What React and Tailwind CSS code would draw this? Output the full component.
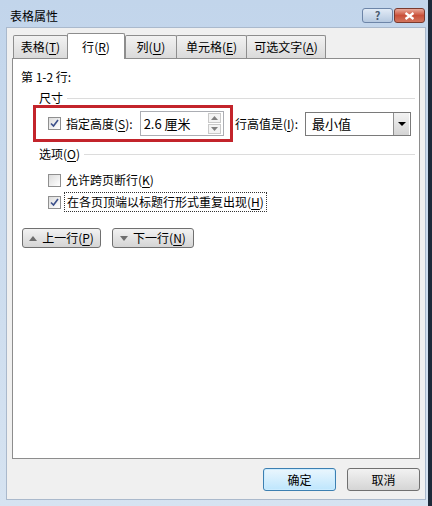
import { useState } from "react";

const font = { fontFamily: '"Noto Sans CJK SC", "Noto Sans", sans-serif' };

function U({ children }) {
  return <span className="underline underline-offset-2">{children}</span>;
}

function Check({ checked }) {
  return (
    <span className="w-[13px] h-[13px] border border-[#8f8f8f] bg-gradient-to-br from-[#dcdcdc] to-white flex items-center justify-center shrink-0">
      {checked && (
        <svg width="9" height="9" viewBox="0 0 9 9">
          <path d="M1 4.5 L3.5 7 L8 1" fill="none" stroke="#3b4f8a" strokeWidth="1.6" />
        </svg>
      )}
    </span>
  );
}

function Tab({ label, hot, active, className = "" }) {
  if (active) {
    return (
      <div className={"relative z-10 -mb-px h-[26px] flex items-center justify-center bg-white border border-b-0 border-[#8d8d8d] rounded-t-[2px] text-[12px] text-black " + className}>
        {label}(<U>{hot}</U>)
      </div>
    );
  }
  return (
    <div className={"mt-[3px] h-[23px] flex items-center justify-center bg-gradient-to-b from-[#f2f2f2] to-[#dadada] border border-b-0 border-[#8d8d8d] rounded-t-[2px] text-[12px] text-black -mr-px " + className}>
      {label}(<U>{hot}</U>)
    </div>
  );
}

function Button({ children, primary, className = "" }) {
  return (
    <div
      className={
        "flex items-center justify-center rounded-[3px] border text-[12px] text-black bg-gradient-to-b " +
        (primary
          ? "border-[#3c7fb1] from-[#eaf6fd] to-[#bee6fd] shadow-[inset_0_0_0_1px_#ccecff] "
          : "border-[#707070] from-[#f2f2f2] to-[#d5d5d5] ") +
        className
      }
    >
      {children}
    </div>
  );
}

export default function App() {
  const [height] = useState("2.6 厘米");

  return (
    <div style={font} className="w-[432px] h-[506px] flex bg-[#c4d6ea] overflow-hidden">
      <div className="flex-1 flex flex-col bg-gradient-to-b from-[#c2d5eb] to-[#d6e3f1]">
        {/* title bar */}
        <div className="h-[27px] flex items-start pl-[10px] pr-[3px]">
          <div className="mt-[7px] text-[12px] text-black">表格属性</div>
          <div className="ml-auto mt-[8px] flex gap-[1px]">
            <div className="w-[31px] h-[15px] rounded-[3px] border border-[#6d85a8] bg-gradient-to-b from-[#e2ebf6] to-[#b6c9e0] flex items-center justify-center text-[11px] font-bold leading-none text-[#4a5a70]">
              ?
            </div>
            <div className="w-[31px] h-[15px] rounded-[3px] border border-[#7a3a2e] bg-gradient-to-b from-[#e9a99b] via-[#c9503a] to-[#d2745d] flex items-center justify-center">
              <svg width="11" height="8" viewBox="0 0 11 8">
                <path d="M1.5 1 L9.5 7 M9.5 1 L1.5 7" stroke="white" strokeWidth="2.2" />
              </svg>
            </div>
          </div>
        </div>

        {/* client area */}
        <div className="flex-1 ml-[6px] mr-[2px] mb-[6px] bg-[#f0f0f0] border border-[#aab9cc] flex flex-col px-[5px] pt-[4px]">
          <div className="flex items-end pl-[1px]">
            <Tab label="表格" hot="T" className="w-[55px]" />
            <Tab label="行" hot="R" active className="w-[58px]" />
            <Tab label="列" hot="U" className="w-[52px]" />
            <Tab label="单元格" hot="E" className="w-[71px]" />
            <Tab label="可选文字" hot="A" className="w-[80px]" />
          </div>

          <div className="h-[401px] bg-white border border-[#8d8d8d] flex flex-col pl-[8px] pr-[4px] pt-[9px] text-[12px] text-black">
            <div>第 1-2 行:</div>

            <div className="flex items-center gap-[4px] mt-[3px] pl-[18px]">
              <span>尺寸</span>
              <div className="flex-1 h-px bg-[#dcdcdc]" />
            </div>

            <div className="flex items-center -mt-[2px]">
              <div className="ml-[12px] w-[200px] h-[37px] border-[3px] border-[#c3242b] flex items-center pl-[12px]">
                <Check checked />
                <span className="ml-[5px]">
                  指定高度(<U>S</U>):
                </span>
                <div className="ml-[7px] w-[84px] h-[25px] border border-[#abadb3] flex items-center pl-[3px] pr-[2px]">
                  <span className="text-[13px]">{height}</span>
                  <div className="ml-auto flex flex-col gap-[1px]">
                    <div className="w-[13px] h-[10px] border border-[#c9c9c9] bg-[#f4f4f4] flex items-center justify-center">
                      <svg width="7" height="4" viewBox="0 0 7 4"><path d="M0 4 L3.5 0 L7 4Z" fill="#808080" /></svg>
                    </div>
                    <div className="w-[13px] h-[10px] border border-[#c9c9c9] bg-[#f4f4f4] flex items-center justify-center">
                      <svg width="7" height="4" viewBox="0 0 7 4"><path d="M0 0 L3.5 4 L7 0Z" fill="#808080" /></svg>
                    </div>
                  </div>
                </div>
              </div>
              <span className="ml-[2px]">
                行高值是(<U>I</U>):
              </span>
              <div className="ml-[7px] w-[106px] h-[24px] border border-[#7a7a7a] flex items-center">
                <span className="pl-[6px] text-[13px]">最小值</span>
                <div className="ml-auto w-[16px] h-[22px] mr-px bg-gradient-to-b from-[#f3f3f3] to-[#d4d4d4] border-l border-[#8f8f8f] flex items-center justify-center">
                  <svg width="8" height="4" viewBox="0 0 8 4"><path d="M0 0 L4 4 L8 0Z" fill="#000" /></svg>
                </div>
              </div>
            </div>

            <div className="flex items-center gap-[4px] mt-[3px] pl-[18px]">
              <span>
                选项(<U>O</U>)
              </span>
              <div className="flex-1 h-px bg-[#dcdcdc]" />
            </div>

            <div className="flex items-center mt-[8px] pl-[27px]">
              <Check />
              <span className="ml-[5px]">
                允许跨页断行(<U>K</U>)
              </span>
            </div>
            <div className="flex items-center mt-[3px] pl-[27px]">
              <Check checked />
              <span className="ml-[3px] px-[2px] border border-dotted border-[#333]">
                在各页顶端以标题行形式重复出现(<U>H</U>)
              </span>
            </div>

            <div className="flex gap-[11px] mt-[16px] pl-[1px]">
              <Button className="w-[79px] h-[20px] gap-[5px]">
                <svg width="8" height="5" viewBox="0 0 8 5"><path d="M0 5 L4 0 L8 5Z" fill="#6e6e6e" /></svg>
                <span>
                  上一行(<U>P</U>)
                </span>
              </Button>
              <Button className="w-[82px] h-[20px] gap-[5px]">
                <svg width="8" height="5" viewBox="0 0 8 5"><path d="M0 0 L4 5 L8 0Z" fill="#6e6e6e" /></svg>
                <span>
                  下一行(<U>N</U>)
                </span>
              </Button>
            </div>
          </div>

          <div className="flex justify-end gap-[11px] mt-[9px]">
            <Button primary className="w-[73px] h-[23px]">确定</Button>
            <Button className="w-[73px] h-[23px]">取消</Button>
          </div>
        </div>
      </div>
      <div className="w-[4px] bg-[#1d2a3a]" />
    </div>
  );
}
